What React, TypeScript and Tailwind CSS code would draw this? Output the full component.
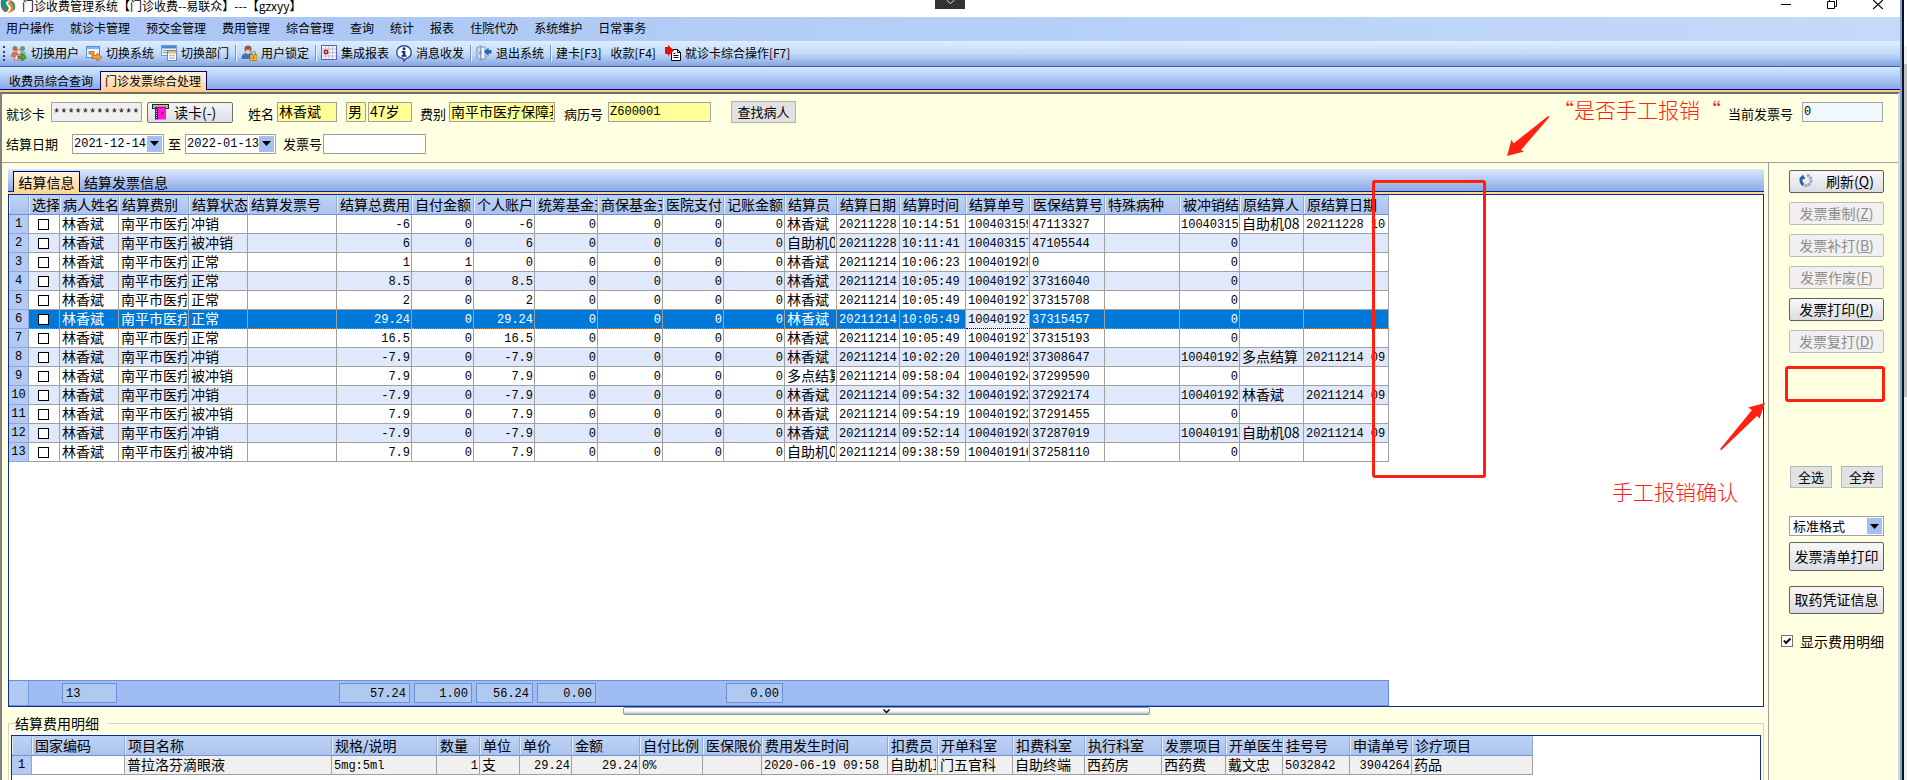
import type { ReactNode } from "react";
import clsx from "clsx";

type Column = { title: string; width: number; align?: "right" };

const menus = ["用户操作", "就诊卡管理", "预交金管理", "费用管理", "综合管理", "查询", "统计", "报表", "住院代办", "系统维护", "日常事务"];

const settleColumns: Column[] = [
  { title: "病人姓名", width: 59 },
  { title: "结算费别", width: 70 },
  { title: "结算状态", width: 59 },
  { title: "结算发票号", width: 89 },
  { title: "结算总费用", width: 75, align: "right" },
  { title: "自付金额", width: 62, align: "right" },
  { title: "个人账户", width: 61, align: "right" },
  { title: "统筹基金支", width: 63, align: "right" },
  { title: "商保基金支", width: 65, align: "right" },
  { title: "医院支付", width: 61, align: "right" },
  { title: "记账金额", width: 61, align: "right" },
  { title: "结算员", width: 52 },
  { title: "结算日期", width: 63 },
  { title: "结算时间", width: 66 },
  { title: "结算单号", width: 64 },
  { title: "医保结算号", width: 75 },
  { title: "特殊病种", width: 75 },
  { title: "被冲销结", width: 60, align: "right" },
  { title: "原结算人", width: 64 },
  { title: "原结算日期", width: 85 },
];

// 状态, 总费用, 自付, 账户, 结算员, 日期, 时间, 单号, 医保号, 被冲销, 原结算人, 原日期
const settleData = [
  ["冲销", "-6", "0", "-6", "林香斌", "20211228", "10:14:51", "100403159", "47113327", "10040315", "自助机08", "20211228 10"],
  ["被冲销", "6", "0", "6", "自助机0", "20211228", "10:11:41", "100403157", "47105544", "0", "", ""],
  ["正常", "1", "1", "0", "林香斌", "20211214", "10:06:23", "100401928", "0", "0", "", ""],
  ["正常", "8.5", "0", "8.5", "林香斌", "20211214", "10:05:49", "100401927", "37316040", "0", "", ""],
  ["正常", "2", "0", "2", "林香斌", "20211214", "10:05:49", "100401927", "37315708", "0", "", ""],
  ["正常", "29.24", "0", "29.24", "林香斌", "20211214", "10:05:49", "100401927", "37315457", "0", "", ""],
  ["正常", "16.5", "0", "16.5", "林香斌", "20211214", "10:05:49", "100401927", "37315193", "0", "", ""],
  ["冲销", "-7.9", "0", "-7.9", "林香斌", "20211214", "10:02:20", "100401925", "37308647", "10040192", "多点结算", "20211214 09"],
  ["被冲销", "7.9", "0", "7.9", "多点结算", "20211214", "09:58:04", "100401924", "37299590", "0", "", ""],
  ["冲销", "-7.9", "0", "-7.9", "林香斌", "20211214", "09:54:32", "100401922", "37292174", "10040192", "林香斌", "20211214 09"],
  ["被冲销", "7.9", "0", "7.9", "林香斌", "20211214", "09:54:19", "100401922", "37291455", "0", "", ""],
  ["冲销", "-7.9", "0", "-7.9", "林香斌", "20211214", "09:52:14", "100401920", "37287019", "10040191", "自助机08", "20211214 09"],
  ["被冲销", "7.9", "0", "7.9", "自助机0", "20211214", "09:38:59", "100401916", "37258110", "0", "", ""],
];

const settleRows = settleData.map(([state, total, self, account, clerk, date, time, no, insNo, offNo, oldClerk, oldDate]) => [
  "林香斌", "南平市医疗", state, "", total, self, account, "0", "0", "0", "0", clerk, date, time, no, insNo, "", offNo, oldClerk, oldDate,
]);

const SELECTED_ROW = 5;
const FOCUSED_COL = 14;

const detailColumns: Column[] = [
  { title: "国家编码", width: 93 },
  { title: "项目名称", width: 207 },
  { title: "规格/说明", width: 105 },
  { title: "数量", width: 43, align: "right" },
  { title: "单位", width: 40 },
  { title: "单价", width: 52, align: "right" },
  { title: "金额", width: 68, align: "right" },
  { title: "自付比例", width: 63 },
  { title: "医保限价", width: 59 },
  { title: "费用发生时间", width: 126 },
  { title: "扣费员", width: 50 },
  { title: "开单科室", width: 75 },
  { title: "扣费科室", width: 72 },
  { title: "执行科室", width: 77 },
  { title: "发票项目", width: 64 },
  { title: "开单医生", width: 57 },
  { title: "挂号号", width: 67 },
  { title: "申请单号", width: 62, align: "right" },
  { title: "诊疗项目", width: 121 },
];

const detailRow = [
  "", "普拉洛芬滴眼液", "5mg:5ml", "1", "支", "29.24", "29.24", "0%", "", "2020-06-19 09:58", "自助机1", "门五官科", "自助终端", "西药房", "西药费", "戴文忠", "5032842", "3904264", "药品",
];

const isAscii = (text: string) => /^[\x20-\x7e]*$/.test(text);

function HeaderCell({ children }: { children?: ReactNode }) {
  return (
    <th className="h-[20px] border-b border-[#6d92d8] bg-gradient-to-b from-[#bcd2f5] to-[#adc3ec] p-0 text-left font-normal">
      <div className="h-[17px] overflow-hidden whitespace-nowrap border-l border-r border-l-[#e6effc] border-r-[#8fa9d6] pl-[2px] leading-[17px]">
        {children}
      </div>
    </th>
  );
}

function Cell({ text, align, className }: { text: string; align?: "right"; className?: string }) {
  return (
    <td className={clsx("h-[19px] border-b border-r border-[#a0a0a0] p-0 pr-px", align === "right" ? "pl-px" : "pl-[2px]", className)}>
      <div
        className={clsx(
          "h-[18px] overflow-hidden whitespace-nowrap",
          align === "right" && "text-right",
          isAscii(text) ? "font-['Liberation_Mono',monospace] text-[12px] leading-[20px]" : "leading-[16px]"
        )}
      >
        {text}
      </div>
    </td>
  );
}

function RowNumber({ n }: { n: number }) {
  return (
    <td className="h-[19px] border-b border-r border-[#8fa9d6] bg-[#b4caf2] p-0 text-center font-['Liberation_Mono',monospace] text-[12px] leading-[18px] text-black">
      {n}
    </td>
  );
}

function SettleTable() {
  return (
    <table className="w-[1380px] table-fixed border-separate border-spacing-0 text-[14px]">
      <colgroup>
        <col style={{ width: 20 }} />
        <col style={{ width: 31 }} />
        {settleColumns.map((c) => (
          <col key={c.title} style={{ width: c.width }} />
        ))}
      </colgroup>
      <thead>
        <tr>
          <HeaderCell />
          <HeaderCell>选择</HeaderCell>
          {settleColumns.map((c) => (
            <HeaderCell key={c.title}>{c.title}</HeaderCell>
          ))}
        </tr>
      </thead>
      <tbody>
        {settleRows.map((row, r) => {
          const selected = r === SELECTED_ROW;
          return (
            <tr key={r} className={clsx(selected ? "bg-[#0078d7] text-white" : r % 2 ? "bg-[#dfe9fb]" : "bg-white")}>
              <RowNumber n={r + 1} />
              <td className={clsx("h-[19px] border-b border-r p-0", selected ? "border-b-[#d98a4c] border-r-[#a0a0a0] [border-bottom-style:dotted]" : "border-[#a0a0a0]")}>
                <div className="flex h-[18px] items-center justify-center pr-px">
                  <input
                    type="checkbox"
                    aria-label={`选择第${r + 1}行`}
                    className="h-[11px] w-[11px] appearance-none border border-black bg-white"
                  />
                </div>
              </td>
              {row.map((text, c) => (
                <Cell
                  key={c}
                  text={text}
                  align={settleColumns[c].align}
                  className={clsx(
                    selected && c !== FOCUSED_COL && "border-b-[#d98a4c] [border-bottom-style:dotted]",
                    selected && c === FOCUSED_COL && "border-b-black bg-[#e6ecfa] text-black [border-bottom-style:dotted]"
                  )}
                />
              ))}
            </tr>
          );
        })}
      </tbody>
    </table>
  );
}

function SumBox({ children, className }: { children: ReactNode; className: string }) {
  return (
    <div className={clsx("h-[20px] shrink-0 border border-[#6b8fd6] bg-[#b0c9f0] px-[3px] font-['Liberation_Mono',monospace] text-[12px] leading-[20px]", className)}>
      {children}
    </div>
  );
}

function DetailTable() {
  return (
    <table className="w-[1521px] table-fixed border-separate border-spacing-0 text-[14px]">
      <colgroup>
        <col style={{ width: 20 }} />
        {detailColumns.map((c) => (
          <col key={c.title} style={{ width: c.width }} />
        ))}
      </colgroup>
      <thead>
        <tr>
          <HeaderCell />
          {detailColumns.map((c) => (
            <HeaderCell key={c.title}>{c.title}</HeaderCell>
          ))}
        </tr>
      </thead>
      <tbody>
        <tr className="bg-[#f0f0f0]">
          <RowNumber n={1} />
          {detailRow.map((text, c) => (
            <Cell key={c} text={text} align={detailColumns[c].align} className={c === 0 ? "bg-white" : undefined} />
          ))}
        </tr>
      </tbody>
    </table>
  );
}

/* ---- toolbar icons ---- */

const UsersIcon = () => (
  <svg width="16" height="16" viewBox="0 0 16 16">
    <circle cx="4" cy="3.5" r="2.5" fill="#a9745a" />
    <circle cx="11.5" cy="3.5" r="2.5" fill="#5b9a9e" />
    <path d="M0 12c0-4 2-5.500 4-5.500s4 1.500 4 5.500z" fill="#d9705c" />
    <path d="M7.500 11c0-3.500 2-4.800 4-4.800s4 1.300 4 4.800z" fill="#7fb6c9" />
    <circle cx="8" cy="7" r="2.500" fill="#f4d2b3" stroke="#b2725a" strokeWidth=".8" />
    <path d="M3.500 15c0-4 2-5.500 4.500-5.500s3.500 1 4 2.500l-2 3z" fill="#f7e4e4" stroke="#c34f4f" strokeWidth=".8" />
    <path d="M7 11h4V8.500l4.500 4-4.500 3.500v-2.500H7z" fill="#4cae3f" stroke="#237021" strokeWidth=".8" />
  </svg>
);

const SystemIcon = () => (
  <svg width="16" height="16" viewBox="0 0 16 16">
    <rect x=".5" y="1.500" width="13" height="11" fill="#eef6ff" stroke="#4a8fd0" />
    <rect x="1" y="2" width="12" height="2" fill="#7db8ec" />
    <path d="M3 6.500h5v4h3V8l5 4.200-5 3.800v-2.500H6V9H3z" fill="#f6a23a" stroke="#b5630c" strokeWidth=".8" />
  </svg>
);

const DeptIcon = () => (
  <svg width="16" height="16" viewBox="0 0 16 16">
    <rect x=".5" y=".5" width="15" height="10" fill="#e8f1fd" stroke="#6e9cd6" />
    <rect x="1" y="1" width="14" height="2.500" fill="#4f83cc" />
    <path d="M2 5.500h4M2 7.500h4" stroke="#7d9bc4" />
    <rect x="6.500" y="5.500" width="9" height="10" fill="#fff" stroke="#6e86ad" />
    <rect x="7" y="6" width="8" height="2.500" fill="#f3b850" />
    <path d="M8.500 10.500h2M11.500 10.500h2M8.500 13h2M11.500 13h2" stroke="#86a3cc" strokeWidth="1.500" />
  </svg>
);

const LockUserIcon = () => (
  <svg width="16" height="16" viewBox="0 0 16 16">
    <circle cx="7" cy="4" r="3.500" fill="#9a5648" />
    <path d="M5 4.500c1 .5 3 .5 4 0v2.500c-1 1.500-3 1.500-4 0z" fill="#f0c7a4" />
    <path d="M.5 14c0-4 2-5.500 4.500-6l2 1.500L9 8c2.500.5 4 2 4 6z" fill="#3f6fb4" />
    <path d="M10.500 10V8.500a2 2 0 0 1 4 0V10" fill="none" stroke="#8a8a8a" strokeWidth="1.200" />
    <rect x="9" y="9.800" width="7" height="5.700" fill="#f3b13c" stroke="#a5690e" strokeWidth=".7" />
    <rect x="12" y="11.500" width="1" height="2" fill="#7a4a05" />
  </svg>
);

const ReportIcon = () => (
  <svg width="16" height="16" viewBox="0 0 16 16">
    <rect x=".5" y=".5" width="15" height="14" fill="#f7f7ff" stroke="#5b62b8" />
    <path d="M1 4h14M1 7.500h14M1 11h14M4.500 1v13M8 1v13M11.500 1v13" stroke="#b9bde4" />
    <rect x="3.500" y="5.500" width="3" height="3" fill="#fff" stroke="#b01818" strokeWidth="1.400" />
  </svg>
);

const InfoIcon = () => (
  <svg width="16" height="17" viewBox="0 0 16 17">
    <path d="M8 .8c4.200 0 7.200 2.700 7.200 6.400 0 3-2 5.500-5 6.200L8 16l-.8-2.500C3.500 13.200.8 10.800.8 7.200.8 3.500 3.800.8 8 .8z" fill="#fff" stroke="#2b4f94" strokeWidth="1.400" />
    <circle cx="8" cy="3.800" r="1.500" fill="#12367f" />
    <path d="M5.500 5.900h3.900v4.400h1.300v1.500H5.400v-1.500h1.300V7.400H5.500z" fill="#12367f" />
  </svg>
);

const ExitIcon = () => (
  <svg width="16" height="16" viewBox="0 0 16 16">
    <path d="M.8 2.500L5 .8v14.400L.8 13z" fill="#c9d5e6" stroke="#6f84a5" strokeWidth=".8" />
    <path d="M5 2h4v12H5z" fill="#eef3fa" stroke="#6f84a5" strokeWidth=".8" />
    <circle cx="4" cy="8" r=".8" fill="#3f5577" />
    <path d="M8 6.500l4.500-4v2.500H15.500v3.500h-3v2.500z" fill="#1f66c4" />
    <path d="M9 10.500l2.500 2" stroke="#d8932f" />
  </svg>
);

const CardIcon = () => (
  <svg width="16" height="16" viewBox="0 0 16 16">
    <path d="M6.500 4.500h6l3 3v8h-9z" fill="#fff" stroke="#000" />
    <path d="M12.500 4.500v3h3M8.500 8.500h2M8.500 10.500h5M8.500 12.500h5" fill="none" stroke="#000" />
    <path d="M0 2h3V0l6 5.500L3 11V9H0z" fill="#e80c0c" />
  </svg>
);

const ReaderIcon = () => (
  <svg width="17" height="16" viewBox="0 0 17 16">
    <rect x=".5" y=".5" width="16" height="4" fill="#b8b8b8" stroke="#222" />
    <path d="M3 3.500h11" stroke="#c01030" strokeWidth="1.500" />
    <rect x="3" y="4" width="3" height="11.500" fill="#1b1bc0" />
    <path d="M4.500 5v10" stroke="#e8d94a" strokeDasharray="1 1" />
    <rect x="6" y="4" width="8" height="11.500" fill="#ff14e0" />
    <rect x="9" y="8" width="2.500" height="2.500" fill="#c01030" />
  </svg>
);

const RefreshIcon = () => (
  <svg width="15" height="15" viewBox="0 0 15 15">
    <path d="M4.500 12A5.200 5.200 0 0 1 3 4.500" fill="none" stroke="#33639f" strokeWidth="3" />
    <path d="M0 6l4-4.500L6.500 6z" fill="#33639f" />
    <path d="M8 2.300a5.200 5.200 0 1 1-3.500 9.700" fill="none" stroke="#9aa6cf" strokeWidth="3" strokeDasharray="2.600 .7" />
  </svg>
);

const LogoIcon = () => (
  <svg width="16" height="13" viewBox="0 0 16 13">
    <path d="M1 0h9c-4 1-5 3-2.500 5.500C10 8 9 11 5 12 1 9 0 4 1 0z" fill="#1d8f80" />
    <path d="M10 0c4 1 6 5 5 9-2 3-5 4-8 3.600C11 11 12 8 9.500 5.500 7 3 7.500 1 10 0z" fill="#e8892b" />
    <path d="M12 1c3 1.500 3.500 5 3 8l-2 1.500C13.500 7 13 4 10.500 2z" fill="#2a9a86" />
    <path d="M8.500 1c-2 2-1.500 3.500 0 5 2 2 1 4.500-1 6" fill="none" stroke="#fff" strokeWidth="1.200" />
    <path d="M1 5c0 3 2 6 4 7l3-1C4 10 2 8 1 5z" fill="#cf4b2c" />
  </svg>
);

function ToolItem({ icon, children }: { icon?: ReactNode; children: ReactNode }) {
  return (
    <button className="flex items-center gap-1 whitespace-nowrap">
      {icon}
      <span className="leading-[16px]">{children}</span>
    </button>
  );
}

const Divider = () => <div className="-ml-px -mr-[2px] h-[17px] w-px bg-[#6f94d2] shadow-[1px_0_0_#eaf2fd]" />;

function Toolbar() {
  return (
    <div className="flex h-[26px] shrink-0 items-center gap-[7px] border-b border-[#3f5fa8] bg-gradient-to-b from-[#dceeff] via-[#c4dbf8] to-[#86a5e2] pb-px pl-[3px] text-[12px]">
      <div className="-mr-px h-[15px] border-l-2 border-dotted border-[#27418f]" />
      <ToolItem icon={<UsersIcon />}>切换用户</ToolItem>
      <ToolItem icon={<SystemIcon />}>切换系统</ToolItem>
      <ToolItem icon={<DeptIcon />}>切换部门</ToolItem>
      <Divider />
      <ToolItem icon={<LockUserIcon />}>用户锁定</ToolItem>
      <Divider />
      <ToolItem icon={<ReportIcon />}>集成报表</ToolItem>
      <ToolItem icon={<InfoIcon />}>消息收发</ToolItem>
      <Divider />
      <ToolItem icon={<ExitIcon />}>退出系统</ToolItem>
      <Divider />
      <div className="flex gap-[9px]">
        <ToolItem>建卡[F3]</ToolItem>
        <ToolItem>收款[F4]</ToolItem>
        <ToolItem icon={<CardIcon />}>就诊卡综合操作[F7]</ToolItem>
      </div>
    </div>
  );
}

const DownArrow = () => (
  <span className="flex h-full w-[15px] shrink-0 items-center justify-center bg-[#a3bff3]">
    <svg width="9" height="5" viewBox="0 0 9 5">
      <path d="M0 0h9L4.500 5z" fill="#000" />
    </svg>
  </span>
);

function Field({ id, label, value, className, mono = true }: { id: string; label?: string; value: string; className: string; mono?: boolean }) {
  return (
    <>
      {label && (
        <label htmlFor={id} className="whitespace-nowrap text-[13px]">
          {label}
        </label>
      )}
      <input
        id={id}
        aria-label={label ?? id}
        defaultValue={value}
        className={clsx(
          "h-[20px] border border-[#a0a0a0] px-px outline-none",
          mono ? "font-['Liberation_Mono',monospace] text-[12px]" : "pb-[2px] text-[14px]",
          className
        )}
      />
    </>
  );
}

function DateField({ id, label, value, className }: { id: string; label: string; value: string; className: string }) {
  return (
    <div className={clsx("flex h-[20px] border border-[#a0a0a0] bg-white p-px", className)}>
      <input id={id} aria-label={label} defaultValue={value} className="w-full min-w-0 font-['Liberation_Mono',monospace] text-[12px] outline-none" />
      <button type="button" aria-label={`选择${label}`}>
        <DownArrow />
      </button>
    </div>
  );
}

function PatientForm() {
  return (
    <form className="border-b border-[#a0a0a0] pb-2 pl-1 pr-[15px] pt-[5px]">
      <div className="flex h-[26px] items-center [&_label]:pt-1">
        <Field id="card" label="就诊卡" value="*************" className="ml-[6px] mr-[5px] w-[91px] border-[#606060] bg-[#f0f0f0] pt-1" />
        <button type="button" className="flex h-[21px] w-[86px] items-center gap-[5px] whitespace-nowrap rounded-[2px] border border-[#707070] bg-gradient-to-b from-[#f4f4f4] to-[#dcdfe8] pl-1 text-[14px] leading-[16px]">
          <ReaderIcon />
          <span className="pb-px">读卡(-)</span>
        </button>
        <div className="w-[15px]" />
        <Field id="name" label="姓名" value="林香斌" mono={false} className="ml-[3px] w-[60px] bg-[#ffff99]" />
        <Field id="性别" value="男" mono={false} className="ml-[9px] w-[20px] bg-[#ffff99]" />
        <Field id="年龄" value="47岁" mono={false} className="ml-[2px] mr-2 w-[44px] bg-[#ffff99]" />
        <Field id="feeType" label="费别" value="南平市医疗保障基" mono={false} className="ml-[3px] mr-[9px] w-[106px] bg-[#ffff99]" />
        <Field id="record" label="病历号" value="Z600001" className="ml-[5px] w-[103px] bg-[#ffff99]" />
        <button type="button" className="ml-5 h-[22px] w-[65px] border border-[#adb2b5] bg-[#e1e1e1] pb-px text-[13px] leading-[16px]">
          查找病人
        </button>
        <div className="ml-auto flex items-center">
          <Field id="invoiceNow" label="当前发票号" value="0" className="ml-[9px] w-[81px] bg-[#f0f8fe]" />
        </div>
      </div>
      <div className="mt-[3px] flex h-[26px] items-center pt-[5px]">
        <label htmlFor="from" className="mr-[14px] whitespace-nowrap text-[13px]">
          结算日期
        </label>
        <DateField id="from" label="开始日期" value="2021-12-14" className="w-[92px]" />
        <label htmlFor="to" className="mx-[4px] text-[13px]">
          至
        </label>
        <DateField id="to" label="结束日期" value="2022-01-13" className="mr-[7px] w-[91px]" />
        <Field id="invoice" label="发票号" value="" className="ml-px w-[103px] bg-white" />
      </div>
    </form>
  );
}

function PushButton({ children, disabled, className }: { children: ReactNode; disabled?: boolean; className: string }) {
  return (
    <button
      disabled={disabled}
      className={clsx(
        "flex w-full items-center justify-center whitespace-nowrap rounded-[2px] border pb-[2px] text-[14px] leading-[18px]",
        disabled ? "border-[#b4bcc8] bg-[#f1f0ee] text-[#8c8c8c]" : "border-[#606060] bg-gradient-to-b from-[#f8f8f8] to-[#dcdde2]",
        className
      )}
    >
      {children}
    </button>
  );
}

const actions = [
  { label: "发票重制", hotkey: "Z", disabled: true },
  { label: "发票补打", hotkey: "B", disabled: true },
  { label: "发票作废", hotkey: "F", disabled: true },
  { label: "发票打印", hotkey: "P", disabled: false },
  { label: "发票复打", hotkey: "D", disabled: true },
];

function SidePanel() {
  return (
    <aside className="w-[130px] shrink-0 border-l border-[#a0a0a0] pl-5 pr-[14px] pt-[7px]">
      <div className="flex flex-col gap-[9px]">
        <PushButton className="h-[23px] gap-3">
          <RefreshIcon />
          <span>
            刷新(<u>Q</u>)
          </span>
        </PushButton>
        {actions.map((a) => (
          <PushButton key={a.label} disabled={a.disabled} className="h-[23px]">
            <span>
              {a.label}(<u>{a.hotkey}</u>)
            </span>
          </PushButton>
        ))}
      </div>
      <div className="mt-[113px] flex justify-between px-px text-[13px] leading-[18px]">
        <button className="h-[22px] w-[42px] border border-[#adb8c0] bg-[#e1e3e3] pb-px">全选</button>
        <button className="h-[22px] w-[42px] border border-[#adb8c0] bg-[#e1e3e3] pb-px">全弃</button>
      </div>
      <div className="mt-7 grid h-[20px] border border-[#a0a0a0] bg-white p-px">
        <select aria-label="打印格式" className="col-start-1 row-start-1 h-[16px] appearance-none pl-[2px] text-[13px] leading-[16px] outline-none">
          <option>标准格式</option>
        </select>
        <span className="pointer-events-none col-start-1 row-start-1 h-[16px] justify-self-end">
          <DownArrow />
        </span>
      </div>
      <PushButton className="mt-[6px] h-[29px]">发票清单打印</PushButton>
      <PushButton className="mt-[15px] h-[28px]">取药凭证信息</PushButton>
      <label className="-ml-2 mt-4 flex h-[22px] items-center justify-between whitespace-nowrap text-[14px]">
        <span className="grid">
          <input type="checkbox" defaultChecked className="col-start-1 row-start-1 h-[12px] w-[12px] appearance-none border border-[#707070] bg-white" />
          <svg className="pointer-events-none col-start-1 row-start-1" width="12" height="12" viewBox="0 0 12 12">
            <path d="M3 5.500l2 2.500 4.500-4.500" fill="none" stroke="#000" strokeWidth="2" />
          </svg>
        </span>
        显示费用明细
      </label>
    </aside>
  );
}

function SettleArea() {
  return (
    <section className="flex min-h-0 flex-1 flex-col">
      <div className="mt-[6px] flex h-[23px] shrink-0 items-end bg-gradient-to-b from-[#dbe7fd] to-[#86a8e3] pl-[5px] text-[14px] leading-[18px] shadow-[inset_0_-1px_0_#0a1f8f]">
        <button className="h-[21px] w-[67px] border border-b-0 border-[#000080] bg-gradient-to-b from-[#fff3dc] to-[#ffd596] pb-px text-center">结算信息</button>
        <button className="h-[21px] px-[4px]">结算发票信息</button>
      </div>
      <div className="h-[2px] shrink-0 bg-[#ffd596]" />
      <div className="flex min-h-0 flex-1 flex-col overflow-hidden border border-[#0a2f9c] bg-white">
        <SettleTable />
        <div className="mt-auto flex h-[26px] w-[1380px] shrink-0 items-center border border-l-0 border-[#6b8fe0] bg-[#9fbcf3]">
          <div className="h-full w-[20px] shrink-0 border-r border-[#7a9ade] bg-[#b0c9f0]" />
          <SumBox className="ml-[33px] w-[55px]">13</SumBox>
          <SumBox className="ml-[222px] w-[71px] text-right">57.24</SumBox>
          <SumBox className="ml-1 w-[58px] text-right">1.00</SumBox>
          <SumBox className="ml-1 w-[57px] text-right">56.24</SumBox>
          <SumBox className="ml-1 w-[59px] text-right">0.00</SumBox>
          <SumBox className="ml-[130px] w-[57px] text-right">0.00</SumBox>
        </div>
      </div>
    </section>
  );
}

function Splitter() {
  return (
    <div className="flex justify-center pr-1">
      <button aria-label="折叠明细" className="flex h-[8px] w-[527px] items-center justify-center rounded-[2px] border border-[#8c9aa0] bg-gradient-to-b from-white via-white to-[#a9bcc4]">
        <svg width="7" height="5" viewBox="0 0 7 5">
          <path d="M.5 .5l3 3 3-3" fill="none" stroke="#000" strokeWidth="1.500" />
        </svg>
      </button>
    </div>
  );
}

/* red review marks drawn over the form */
function Annotations() {
  return (
    <div className="pointer-events-none text-[21px] leading-[24px] text-[#ff2010]">
      <p className="absolute left-[1553px] top-[97px] whitespace-nowrap font-light">“是否手工报销“</p>
      <p className="absolute left-[1612px] top-[479px] whitespace-nowrap font-light">手工报销确认</p>
      <div className="absolute left-[1372px] top-[180px] h-[298px] w-[114px] rounded-[3px] border-3 border-[#ff2010]" />
      <div className="absolute left-[1785px] top-[366px] h-[36px] w-[100px] rounded-[3px] border-3 border-[#ff2010]" />
      <svg className="absolute left-[1506px] top-[115px]" width="45" height="42" viewBox="0 0 45 42">
        <path d="M1 41L5.500 24.500 7.500 28.500 41.500 1.500Q43.500 .5 43 2.500L15 35 18 36.500Z" fill="#ff2010" />
      </svg>
      <svg className="absolute left-[1719px] top-[402px]" width="47" height="49" viewBox="0 0 47 49">
        <path d="M46 1L29 5.500 33 8 1.500 46.500Q.8 49 3 47.500L38 14 40.500 16.500Z" fill="#ff2010" />
      </svg>
    </div>
  );
}

export default function App() {
  return (
    <div className="relative flex h-screen overflow-hidden bg-white font-['Noto_Sans_CJK_SC',sans-serif] text-black">
      <div className="flex min-w-0 flex-1 flex-col">
        <header className="flex h-[17px] shrink-0 items-start justify-between overflow-hidden bg-white">
          <div className="flex items-start gap-[6px]">
            <LogoIcon />
            <h1 className="text-[12px] leading-[12px]">门诊收费管理系统【门诊收费--易联众】---【gzxyy】</h1>
          </div>
          <div className="flex items-start gap-9 pr-[17px]">
            <button aria-label="最小化">
              <svg width="10" height="10" viewBox="0 0 10 10"><path d="M0 4.500h10" stroke="#000" /></svg>
            </button>
            <button aria-label="还原">
              <svg width="10" height="10" viewBox="0 0 10 10"><path d="M.5 1.500h7v7h-7zM2.500 1V0M9.500 0v6.500H8" fill="none" stroke="#000" /></svg>
            </button>
            <button aria-label="关闭">
              <svg width="10" height="10" viewBox="0 0 10 10"><path d="M0 0l10 9M10 0L0 9" stroke="#000" strokeWidth="1.200" /></svg>
            </button>
          </div>
        </header>
        <nav className="flex h-[24px] shrink-0 items-center gap-4 bg-gradient-to-r from-[#a8c4f5] to-[#c4daf8] pb-[2px] pl-[6px] text-[12px]">
          {menus.map((m) => (
            <a key={m} href="#" className="whitespace-nowrap">
              {m}
            </a>
          ))}
        </nav>
        <Toolbar />
        <div className="flex h-[23px] shrink-0 items-end bg-gradient-to-b from-[#d4eafe] to-[#88a5e6] pl-[9px] text-[12px] leading-[18px] shadow-[inset_0_-1px_0_#000080]">
          <button className="h-[19px] w-[91px] text-left">收费员综合查询</button>
          <button className="h-[19px] w-[107px] border border-b-0 border-[#000080] bg-gradient-to-b from-[#fff1da] to-[#ffd39a] pl-1 text-left">门诊发票综合处理</button>
        </div>
        <div className="h-[2px] shrink-0 bg-[#ffcb8c]" />
        <main className="flex min-h-0 flex-1 flex-col border-l-2 border-r-2 border-t-2 border-l-[#808080] border-r-[#d8d8cc] border-t-[#6e6e66] bg-[#ffffe1]">
          <PatientForm />
          <div className="flex min-h-0 flex-1">
            <div className="flex min-w-0 flex-1 flex-col pl-[6px]">
              <div className="flex min-h-0 flex-1 flex-col pr-1">
                <SettleArea />
              </div>
              <Splitter />
              <fieldset className="mr-1 h-[65px] min-w-0 shrink-0 overflow-hidden border border-b-0 border-[#d5d5c8] px-[2px]">
                <legend className="ml-1 pr-2 text-[14px] leading-[16px]">结算费用明细</legend>
                <div className="mt-1 h-[45px] overflow-hidden border border-b-0 border-[#0a2f9c] bg-white">
                  <DetailTable />
                </div>
              </fieldset>
            </div>
            <SidePanel />
          </div>
        </main>
      </div>
      <div className="w-[2px] shrink-0 bg-[#7fa3e6]" />
      <div className="w-[2px] shrink-0 bg-[#111111]" />
      <div className="flex w-[3px] shrink-0 flex-col bg-[#f0f0f0]">
        <div className="h-[46px] bg-white" />
        <div className="mt-[18px] h-[333px] bg-[#c0c0c0]" />
      </div>
      <div className="absolute left-[935px] top-0 flex h-[9px] w-[30px] justify-center bg-[#333333]">
        <svg width="9" height="5" viewBox="0 0 9 5">
          <path d="M.5 0l4 3.500 4-3.500" fill="none" stroke="#ddd" />
        </svg>
      </div>
      <Annotations />
    </div>
  );
}
